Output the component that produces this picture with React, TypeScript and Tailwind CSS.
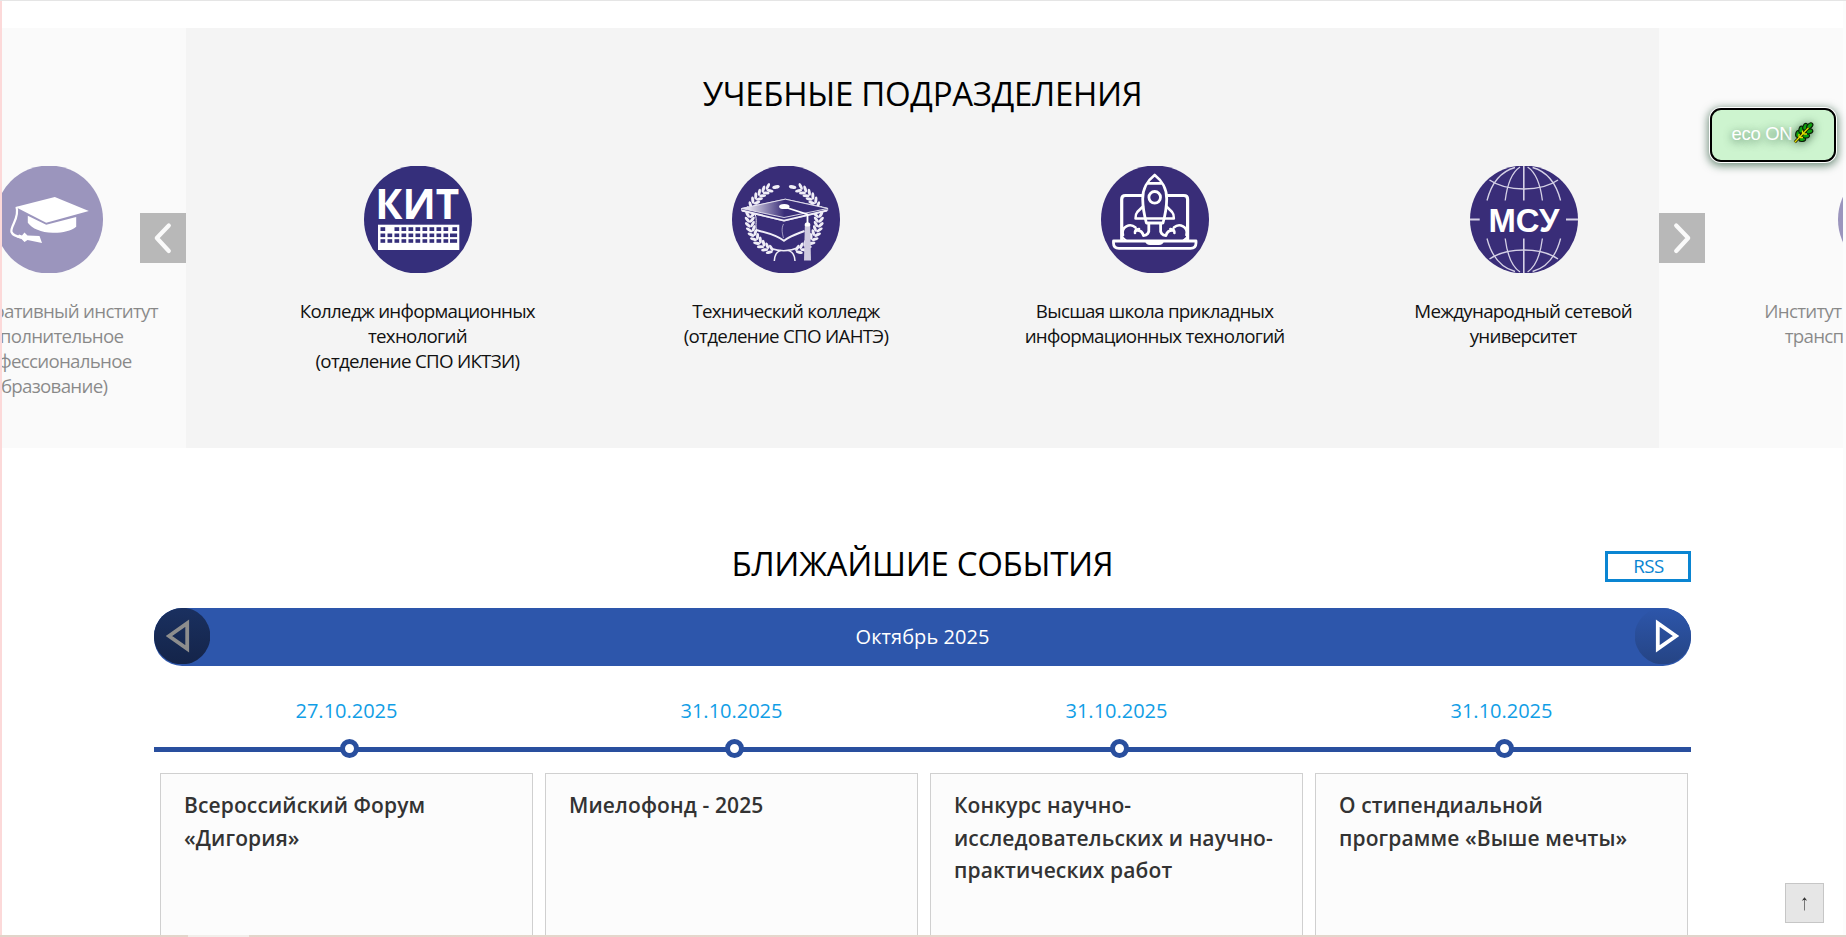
import type { ReactNode } from "react";

const WHITE = "#ffffff";

function Badge({ fill, children }: { fill: string; children?: ReactNode }) {
  return (
    <svg width="108" height="107" viewBox="0 0 108 107" className="block overflow-hidden">
      <ellipse cx="54" cy="53.5" rx="54" ry="54" fill={fill} />
      {children}
    </svg>
  );
}

function CapIcon() {
  return (
    <Badge fill="#372a7b">
      <g fill={WHITE}>
        <path d="M20.5 41 L59.8 31 L93.8 45 L51.2 56.7 Z" />
        <path d="M32.8 49.7 L51.2 58.7 L81.2 51 V60.7 C76 65 67 66.9 57.8 66.7 C46 66.4 37 62.5 32.8 56.7 Z" />
        <path d="M24 68.5 L27 69.5 L29.5 66.5 L32.5 69.5 L44.5 70 L47 77 L32.5 74 L29.5 76 L26.5 73 L22 71.5 Z" />
      </g>
      <path d="M21.5 41 C25 52 15 60 16.5 66 Q18 70 26 71.3" fill="none" stroke={WHITE} strokeWidth="2.2" />
    </Badge>
  );
}

function KeyboardIcon() {
  const cols = [0, 1, 2, 3, 4, 5, 6, 7, 8, 9];
  return (
    <Badge fill="#352f7b">
      <text x="11.3" y="53.2" textLength="84" lengthAdjust="spacingAndGlyphs" fill={WHITE} className="font-['Open_Sans'] text-[42px] font-bold">
        КИТ
      </text>
      <rect x="14" y="58.7" width="81.3" height="25.3" fill={WHITE} />
      <g fill="#352f7b">
        {cols.filter((k) => k !== 1).map((k) => <rect key={k} x={16.5 + 7 * k} y="61.2" width="4.7" height="3.8" />)}
        <rect x="88.4" y="61.2" width="4.7" height="3.8" />
        {[67.5, 73.2].map((y) => (
          <g key={y}>
            {cols.map((k) => <rect key={k} x={16.5 + 7 * k} y={y} width="4.7" height="3.6" />)}
            <rect x="86" y={y} width="7.1" height="3.6" />
          </g>
        ))}
      </g>
    </Badge>
  );
}

function Laurel() {
  const steps = Array.from({ length: 17 }, (_, i) => 114 + i * 8.1);
  return (
    <g fill="#f0eef7">
      {steps.map((deg) => {
        const a = (deg * Math.PI) / 180;
        const x = 52.3 + 34.5 * Math.cos(a);
        const y = 53 + 34 * Math.sin(a);
        const ix = x - 2.4 * Math.cos(a);
        const iy = y - 2.4 * Math.sin(a);
        const ox = x + 2.4 * Math.cos(a);
        const oy = y + 2.4 * Math.sin(a);
        return (
          <g key={deg}>
            <ellipse cx={ix} cy={iy} rx="3.5" ry="1.5" transform={`rotate(${deg + 128} ${ix} ${iy})`} />
            <ellipse cx={ox} cy={oy} rx="3.6" ry="1.5" transform={`rotate(${deg + 52} ${ox} ${oy})`} />
          </g>
        );
      })}
      <ellipse cx="44" cy="21" rx="3.8" ry="1.9" transform="rotate(-12 44 21)" />
    </g>
  );
}

function LaurelCapIcon() {
  return (
    <Badge fill="#392d78">
      <defs>
        <linearGradient id="board" x1="0" x2="1" y1="0" y2="0">
          <stop offset="0.08" stopColor="#e4e1ee" />
          <stop offset="0.5" stopColor="#392d78" />
        </linearGradient>
      </defs>
      <Laurel />
      <g transform="translate(104.6 0) scale(-1 1)"><Laurel /></g>
      <path d="M23.5 49 C25 55 23 59 24.5 64 C34 66 45 69 52 75 C59 69 68 67 77 63 C76 58 76 54 77 48 L52 55 Z" fill="#392d78" />
      <g fill="none" stroke="#f0eef7">
        <path d="M24 64 C34 66.5 44 68.5 52 74.8 C59 69.5 65 68 72.5 65" strokeWidth="2" />
        <path d="M23 48 C25.5 54 23 59 24.5 64" strokeWidth="1" />
        <path d="M51.5 58 C49 63 50.5 68 51.5 72" strokeWidth="0.8" opacity="0.7" />
        <path d="M39 82.5 C48 85.5 58 85.5 68 81" strokeWidth="1.5" />
        <path d="M42.3 95 C42.5 89 45 85.5 49 84.4 M63 95 C62.8 89 60 85.5 56 84.4" strokeWidth="1.5" />
      </g>
      <path d="M9.5 42.5 L53.3 33.2 L95.7 42.2 V44.5 L52 55 L9.5 44.8 Z" fill="#392d78" stroke="#f0eef7" strokeWidth="0.8" />
      <path d="M9.5 42.5 L53.3 33.2 L95.7 42.5 L52 51.5 Z" fill="url(#board)" stroke="#e9e6f2" strokeWidth="0.9" />
      <path d="M10 44.5 L52 54.6 L95 44.5" fill="none" stroke="#f0eef7" strokeWidth="1.8" />
      <path d="M54 41.5 L75.5 48.3 V61" fill="none" stroke={WHITE} strokeWidth="1.8" />
      <ellipse cx="52.3" cy="40.5" rx="5.2" ry="2.6" fill={WHITE} />
      <circle cx="75.5" cy="59" r="2.8" fill={WHITE} />
      <path d="M72.8 60.5 H78.2 L79 94.5 H72 Z" fill="#cfcae0" />
    </Badge>
  );
}

function RocketIcon() {
  return (
    <Badge fill="#392d78">
      <g fill="none" stroke={WHITE} strokeWidth="2.8" strokeLinejoin="round" strokeLinecap="round">
        <path d="M41 29.5 H24.5 Q20.7 29.5 20.7 33.3 V73.5 M66 29.5 H82.8 Q86.6 29.5 86.6 33.3 V73.5" strokeWidth="3.2" />
        <path d="M12.5 75 H95 V77 Q95 82.3 89.5 82.3 H18 Q12.5 82.3 12.5 77 Z" />
        <path d="M53.7 9 C46.5 14.5 41.5 23.5 41.7 33 C41.8 42 43.5 50 45.4 57 H62 C63.9 50 65.6 42 65.7 33 C65.9 23.5 60.9 14.5 53.7 9 Z" />
        <path d="M47.2 17.3 H60.2" />
        <circle cx="53.7" cy="31.3" r="5.8" />
        <path d="M41.9 40.5 L36.3 46 Q34.3 48.2 34.5 52.5 H72.9 Q73.1 48.2 71.1 46 L65.5 40.5" strokeWidth="2.5" />
        <path d="M47.8 58 V62 C48.5 67 46 69.5 42.5 69.7 C41.5 66 39 64 35 64.5 M59.6 58 V62 C58.9 67 61.4 69.5 64.9 69.7 C65.9 66 68.4 64 72.4 64.5" />
        <path d="M22 69 C19.8 61 29 56.5 34.5 61.5 M38 63 Q33.5 63.5 34 67 M85.4 69 C87.6 61 78.4 56.5 72.9 61.5 M69.4 63 Q73.9 63.5 73.4 67" strokeWidth="2.6" />
        <path d="M21 71 L25 74.5 M86.4 71 L82.4 74.5" strokeWidth="2" />
      </g>
      <path d="M44 75 H63 Q62 79 58 79 H49 Q45 79 44 75 Z" fill={WHITE} />
    </Badge>
  );
}

function GlobeIcon() {
  return (
    <Badge fill="#392d78">
      <g fill="none" stroke="#d5d1e6" strokeWidth="1.3">
        <path d="M0 53.5 H9.7 M96 53.5 H108" strokeWidth="1.8" />
        {["", "translate(0 107) scale(1 -1)"].map((t) => (
          <g key={t} transform={t}>
            <path d="M53.8 0 V34.5" strokeWidth="1.6" />
            <path d="M50 1 C41 7 37 20 35.2 34.5 M57.6 1 C66.6 7 70.6 20 72.4 34.5" />
            <path d="M45 1.5 C29 6 21 19 17 34.5 M62.6 1.5 C78.6 6 86.6 19 90.6 34.5" />
            <path d="M19.5 14 C37 26 71 26 88 14" strokeWidth="1.5" />
          </g>
        ))}
      </g>
      <text x="18.5" y="66.3" textLength="71" lengthAdjust="spacingAndGlyphs" fill={WHITE} className="font-['Liberation_Sans'] text-[34px] font-bold">
        МСУ
      </text>
    </Badge>
  );
}

const divisions: { lines: string[]; icon: ReactNode }[] = [
  { lines: ["Корпоративный институт", "(дополнительное", "профессиональное", "образование)"], icon: <CapIcon /> },
  { lines: ["Колледж информационных", "технологий", "(отделение СПО ИКТЗИ)"], icon: <KeyboardIcon /> },
  { lines: ["Технический колледж", "(отделение СПО ИАНТЭ)"], icon: <LaurelCapIcon /> },
  { lines: ["Высшая школа прикладных", "информационных технологий"], icon: <RocketIcon /> },
  { lines: ["Международный сетевой", "университет"], icon: <GlobeIcon /> },
  { lines: ["Институт авиации, наземного", "транспорта и энергетики"], icon: <Badge fill="#372a7b" /> },
];

const events = [
  { date: "27.10.2025", lines: ["Всероссийский Форум", "«Дигория»"] },
  { date: "31.10.2025", lines: ["Миелофонд - 2025"] },
  { date: "31.10.2025", lines: ["Конкурс научно-", "исследовательских и научно-", "практических работ"] },
  { date: "31.10.2025", lines: ["О стипендиальной", "программе «Выше мечты»"] },
];

function Chevron({ flip }: { flip?: boolean }) {
  return (
    <svg width="46" height="50" viewBox="0 0 46 50" className={flip ? "-scale-x-100" : ""}>
      <path d="M28.8 12.5 L16.8 25 L28.8 38" fill="none" stroke="#fafafa" strokeWidth="4.2" strokeLinecap="round" strokeLinejoin="round" />
    </svg>
  );
}

function MonthArrow({ flip }: { flip?: boolean }) {
  const id = flip ? "next" : "prev";
  return (
    <svg width="56" height="56" viewBox="0 0 56 56" className={flip ? "-scale-x-100" : ""}>
      <defs>
        <linearGradient id={id} x1="0" x2="0" y1="0" y2="1">
          <stop offset="0" stopColor={flip ? "#2d56ab" : "#1a3060"} />
          <stop offset="1" stopColor={flip ? "#254484" : "#142449"} />
        </linearGradient>
      </defs>
      <circle cx="28" cy="28" r="28.3" fill={`url(#${id})`} />
      <path d="M15 28 L33.2 15.2 V40.8 Z" fill="none" stroke={flip ? WHITE : "#8d8d8d"} strokeWidth="3.8" />
    </svg>
  );
}

function Leaf() {
  const blades: [number, number, number][] = [
    [5, 11, -80], [8.2, 6.6, -76], [12.2, 3.8, -68], [16.8, 2.8, -42],
    [9.2, 16.2, -8], [13, 12.8, -8], [16.4, 8.4, -18],
  ];
  return (
    <svg width="20" height="21" viewBox="0 0 20 21" className="overflow-visible drop-shadow-[0_1px_5px_rgba(20,60,30,0.7)]">
      <g fill="#0da00d" stroke="#0b1d08" strokeWidth="1.1">
        {blades.map(([x, y, r]) => <ellipse key={`${x}`} cx={x} cy={y} rx="3.5" ry="2.3" transform={`rotate(${r} ${x} ${y})`} />)}
      </g>
      <path d="M1.8 19.3 L15.5 4.8" stroke="#1c1c00" strokeWidth="2.8" />
      <path d="M1.8 19.3 L15.5 4.8 M6 11 V14.5 M9.5 7.5 V11 M7 14.5 H10 M10.5 11 H14" stroke="#e0e000" strokeWidth="1.3" />
    </svg>
  );
}

export default function App() {
  return (
    <div className="relative h-[937px] w-[1846px] overflow-hidden border-t border-t-[#e5e5e5] bg-white font-['Open_Sans',sans-serif]">
      <div className="h-[934px] overflow-hidden border-l-2 border-r-[3px] border-l-[#fcd9d9] border-r-[#fcfcfc]">
        <section className="relative mt-[27px] h-[420px] overflow-hidden bg-[#f4f4f4] pt-[43px]">
          <h2 className="text-center text-[33px] leading-[45px] tracking-[-0.3px] text-black">УЧЕБНЫЕ ПОДРАЗДЕЛЕНИЯ</h2>
          <div className="-ml-[137px] mt-[50px] flex w-[2211.6px]">
            {divisions.map((d) => (
              <article key={d.lines[0]} className="flex w-[368.6px] shrink-0 flex-col items-center">
                {d.icon}
                <p className="-ml-px mt-[25px] whitespace-nowrap text-center text-[18.75px] leading-[25px] tracking-[-0.73px] text-[#111111]">
                  {d.lines.map((l) => <span key={l} className="block">{l}</span>)}
                </p>
              </article>
            ))}
          </div>
          <div className="absolute inset-y-0 left-0 w-[184px] bg-white/50" />
          <div className="absolute inset-y-0 right-0 w-[184px] bg-white/50" />
          <button className="absolute left-[138px] top-[185px] h-[50px] w-[46px] bg-[#b8b8b8]"><Chevron /></button>
          <button className="absolute right-[138px] top-[185px] h-[50px] w-[46px] bg-[#b8b8b8]"><Chevron flip /></button>
        </section>

        <section className="ml-[152px] mt-[93px] w-[1537px]">
          <div className="relative">
            <h2 className="text-center text-[33px] leading-[45px] tracking-[-0.3px] text-black">БЛИЖАЙШИЕ СОБЫТИЯ</h2>
            <button className="absolute right-0 top-[10px] h-[31px] w-[86px] border-[3px] border-[#0a85d2] pl-px text-[18.75px] leading-[22px] tracking-[-0.5px] text-[#0a85d2]"><span className="relative -top-px">RSS</span></button>
          </div>
          <div className="mt-[22px] flex h-[58px] items-start justify-between overflow-hidden rounded-[28px] bg-[#2d56ab]">
            <MonthArrow />
            <span className="text-[20px] leading-[57px] tracking-[0.05px] text-white">Октябрь 2025</span>
            <MonthArrow flip />
          </div>
          <div className="relative ml-[6px] flex w-[1540px] gap-3">
            <div className="absolute -left-[6px] top-[81px] h-[5px] w-[1537px] bg-[#294f9e]" />
            {events.map((e, i) => (
              <article key={i} className="relative flex w-[373px] shrink-0 flex-col items-center">
                <time className="mt-[31px] block text-[20px] leading-[27px] text-[#119ee6]">{e.date}</time>
                <span className="ml-[6px] mt-[15px] h-[19px] w-[19px] rounded-full border-[5px] border-[#294f9e] bg-white" />
                <div className="mt-[15px] h-[240px] w-full border border-[#d0d0d0] bg-[#fcfcfc] px-[23px] pt-[15px] text-[21px] font-semibold leading-[32.5px] tracking-[0.12px] text-[#333333]">
                  {e.lines.map((l) => <div key={l} className="whitespace-nowrap">{l}</div>)}
                </div>
              </article>
            ))}
          </div>
        </section>
      </div>

      <footer className="flex h-[2px] bg-gradient-to-r from-[#e1d5ca] via-[#e6d8cd] to-[#dfd4cb]">
        <div className="ml-[188px] w-[61px] bg-[#f2eeea]" />
      </footer>

      <button className="absolute left-[1710px] top-[107px] flex h-[54px] w-[126px] items-start rounded-[11px] border-2 border-black bg-[#cdf4cf] pl-[19.5px] pt-[13px] font-['Liberation_Sans',sans-serif] text-[18.5px] leading-[21px] text-white shadow-[0_0_0_1px_#ffffff,0_2px_8px_2px_rgba(20,70,40,0.6)]">
        <span className="tracking-[-0.3px] [text-shadow:0_2px_8px_rgba(20,70,40,0.7)]">eco ON</span>
        <span className="ml-px"><Leaf /></span>
      </button>

      <button className="absolute left-[1785px] top-[882px] flex h-10 w-[39px] items-center justify-center border border-[#c6c6c6] bg-[#e6e6e6]">
        <svg width="12" height="16" viewBox="0 0 12 16">
          <path d="M5.5 15.5 V3" fill="none" stroke="#777777" strokeWidth="1" />
          <path d="M2.8 5.8 L5.5 2.2 L8.2 5.8 L5.5 4.8 Z" fill="#333333" />
        </svg>
      </button>
    </div>
  );
}
